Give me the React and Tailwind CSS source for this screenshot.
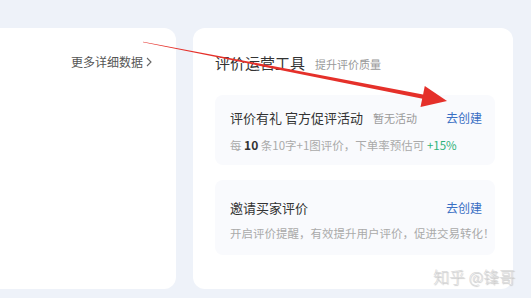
import React from 'react';

const font = { fontFamily: '"Noto Sans CJK SC", "Noto Sans", sans-serif' };

// red annotation arrow drawn over the screenshot
function Arrow() {
  return (
    <svg className="absolute inset-0 pointer-events-none" width="531" height="298" viewBox="0 0 531 298">
      <polygon points="143,41.7 143,42.3 423.9,99 423,94.4" fill="#e5302a" />
      <polygon points="447,101 420.5,107 424.8,86" fill="#e5302a" />
    </svg>
  );
}

export default function App() {
  return (
    <div className="relative w-[531px] h-[298px] overflow-hidden bg-[#eef2f9]" style={font}>
      <div className="flex items-start pt-[28px] gap-[17px]">
        {/* Left card */}
        <div className="w-[176px] h-[261px] bg-white rounded-r-[12px] flex items-start justify-end pr-[24px] pt-[25px]">
          <div className="text-[12px] leading-[18px] text-[#555] flex items-center gap-[3px]">
            更多详细数据
            <svg width="6" height="10" viewBox="0 0 6 10">
              <path d="M1 1 L5 5 L1 9" fill="none" stroke="#666" strokeWidth="1.1" />
            </svg>
          </div>
        </div>

        {/* Right card */}
        <div className="w-[320px] h-[261px] bg-white rounded-[12px] pl-[22px] pr-[18px] pt-[25px]">
          <div className="flex items-baseline gap-[10px]">
            <span className="text-[15px] leading-[20px] text-[#333]">评价运营工具</span>
            <span className="text-[11px] text-[#999]">提升评价质量</span>
          </div>

          <div className="mt-[22px] bg-[#f9fafd] rounded-[8px] pl-[15px] pr-[13px] pt-[14px] pb-[12px]">
            <div className="flex items-center justify-between">
              <div className="flex items-center gap-[10px]">
                <span className="text-[13px] leading-[18px] text-[#333]">评价有礼 官方促评活动</span>
                <span className="text-[11px] leading-[18px] text-[#999]">暂无活动</span>
              </div>
              <span className="text-[12px] leading-[18px] text-[#3a6fc4]">去创建</span>
            </div>
            <div className="mt-[10px] text-[11.5px] leading-[16px] text-[#aaa]">
              每 <span className="font-bold text-[#333] text-[12px]">10</span> 条10字+1图评价，下单率预估可 <span className="text-[#2fb27a]">+15%</span>
            </div>
          </div>

          <div className="mt-[15px] bg-[#f9fafd] rounded-[8px] pl-[15px] pr-[13px] pt-[19px] pb-[14px]">
            <div className="flex items-center justify-between">
              <span className="text-[13px] leading-[18px] text-[#333]">邀请买家评价</span>
              <span className="text-[12px] leading-[18px] text-[#3a6fc4]">去创建</span>
            </div>
            <div className="mt-[8px] text-[11.5px] leading-[16px] text-[#aaa] whitespace-nowrap">
              开启评价提醒，有效提升用户评价，促进交易转化！
            </div>
          </div>
        </div>
      </div>

      <div className="absolute left-[433px] top-[265px] text-[16px] leading-[22px] font-light text-[#dadada] whitespace-nowrap" style={{ textShadow: '1px 1px 1px #c4c4c4' }}>
        知乎 @锋哥
      </div>

      <Arrow />
    </div>
  );
}
